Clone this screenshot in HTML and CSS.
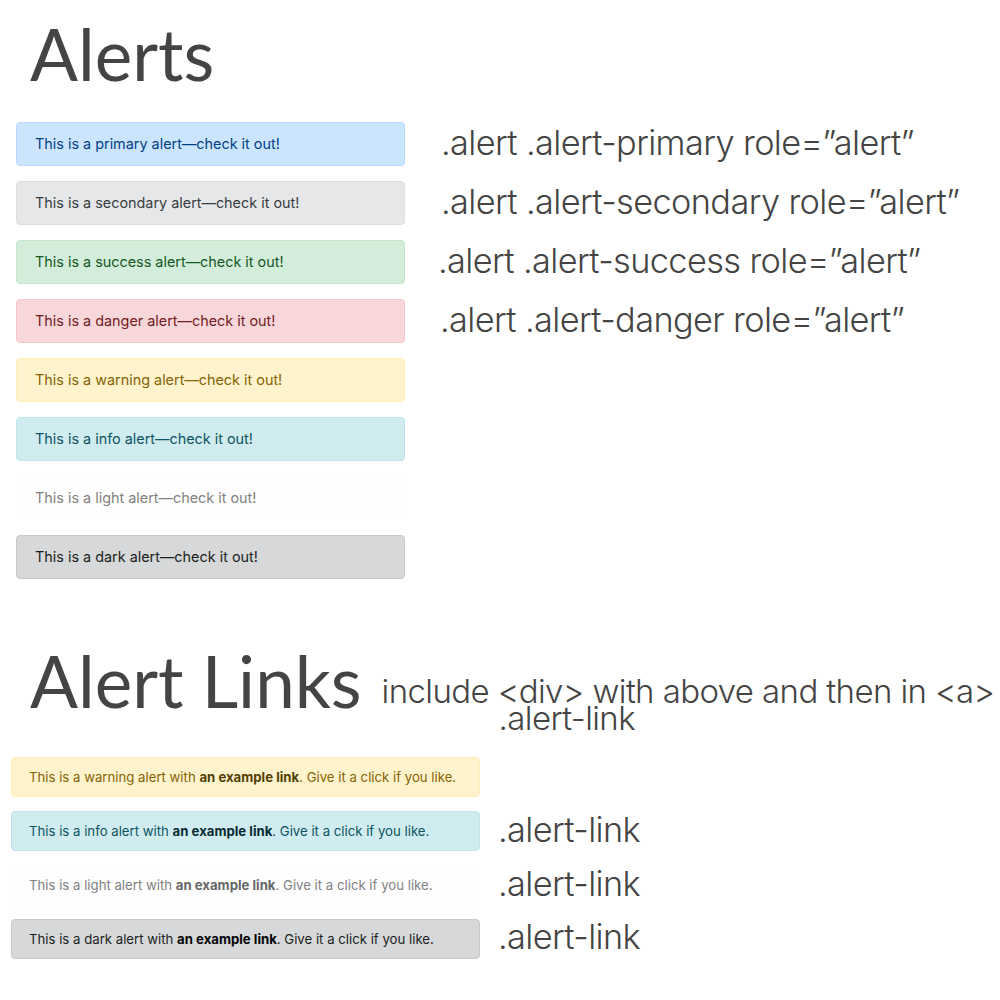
FILE: index.html
```html
<!DOCTYPE html>
<html>
<head>
<meta charset="utf-8">
<link rel="stylesheet" href="styles.css">
</head>
<body>
<div class="page">
  <h1 class="title">Alerts</h1>
  <div class="rows">
    <div class="row"><div class="alert alert-primary">This is a primary alert—check it out!</div><span class="label">.alert .alert-primary role=”alert”</span></div>
    <div class="row"><div class="alert alert-secondary">This is a secondary alert—check it out!</div><span class="label">.alert .alert-secondary role=”alert”</span></div>
    <div class="row"><div class="alert alert-success">This is a success alert—check it out!</div><span class="label label-shift">.alert .alert-success role=”alert”</span></div>
    <div class="row"><div class="alert alert-danger">This is a danger alert—check it out!</div><span class="label label-shift2">.alert .alert-danger role=”alert”</span></div>
    <div class="row"><div class="alert alert-warning">This is a warning alert—check it out!</div></div>
    <div class="row"><div class="alert alert-info">This is a info alert—check it out!</div></div>
    <div class="row"><div class="alert alert-light">This is a light alert—check it out!</div></div>
    <div class="row"><div class="alert alert-dark">This is a dark alert—check it out!</div></div>
  </div>

  <div class="links-head">
    <h1 class="title title-links">Alert Links</h1>
    <div class="note">
      <div class="note-line">include &lt;div&gt; with above and then in &lt;a&gt;</div>
      <div class="note-line note-indent">.alert-link</div>
    </div>
  </div>

  <div class="link-rows">
    <div class="row"><div class="alert alert-sm alert-warning">This is a warning alert with <a class="alert-link">an example link</a>. Give it a click if you like.</div></div>
    <div class="row"><div class="alert alert-sm alert-info">This is a info alert with <a class="alert-link">an example link</a>. Give it a click if you like.</div><span class="label label-sm">.alert-link</span></div>
    <div class="row"><div class="alert alert-sm alert-light">This is a light alert with <a class="alert-link">an example link</a>. Give it a click if you like.</div><span class="label label-sm">.alert-link</span></div>
    <div class="row"><div class="alert alert-sm alert-dark">This is a dark alert with <a class="alert-link">an example link</a>. Give it a click if you like.</div><span class="label label-sm label-last">.alert-link</span></div>
  </div>
</div>
</body>
</html>
```

FILE: styles.css
```css
html, body {
  margin: 0;
  padding: 0;
  background: #ffffff;
}
.page {
  width: 1000px;
  height: 1000px;
  overflow: hidden;
  font-family: "Inter", "Liberation Sans", sans-serif;
  color: #444444;
}
.title {
  margin: 0;
  padding: 14px 0 0 30px;
  font-family: "Lato", sans-serif;
  font-weight: 400;
  font-size: 71px;
  line-height: 80px;
  color: #444444;
}
.rows {
  display: flex;
  flex-direction: column;
  gap: 15px;
  padding: 28px 0 0 16px;
}
.row {
  display: flex;
  align-items: center;
}
.alert {
  box-sizing: border-box;
  width: 389px;
  height: 44px;
  padding: 0 18px;
  line-height: 42px;
  border: 1px solid transparent;
  border-radius: 4px;
  font-family: "Inter", "Liberation Sans", sans-serif;
  font-size: 14.4px;
  flex-shrink: 0;
  white-space: nowrap;
}
.alert-primary { background: #cce5ff; border-color: #b8daff; color: #004085; }
.alert-secondary { background: #e6e7e9; border-color: #dcdee0; color: #383d41; }
.alert-success { background: #d4edda; border-color: #c3e6cb; color: #155724; }
.alert-danger { background: #f8d7da; border-color: #f5c6cb; color: #721c24; }
.alert-warning { background: #fff3cd; border-color: #ffeeba; color: #856404; }
.alert-info { background: #d1ecf1; border-color: #bee5eb; color: #0c5460; }
.alert-light { background: #fefefe; border-color: #fdfdfe; color: #818182; }
.alert-dark { background: #d6d8d9; border-color: #c6c8ca; color: #1b1e21; }

.label {
  margin-left: 36px;
  margin-top: -4px;
  font-family: "Inter", sans-serif;
  font-weight: 300;
  font-size: 34.3px;
  letter-spacing: -0.6px;
  color: #444444;
  white-space: nowrap;
}
.label-shift { margin-left: 33px; }
.label-shift2 { margin-left: 35px; }

.links-head {
  display: flex;
  align-items: flex-start;
  padding-top: 62px;
}
.title-links {
  padding-top: 0;
  flex-shrink: 0;
}
.note {
  margin-left: 20px;
  padding-top: 37px;
  font-family: "Inter", sans-serif;
  font-weight: 300;
  font-size: 33px;
  letter-spacing: -0.6px;
  line-height: 27px;
  color: #444444;
  white-space: nowrap;
}
.note-indent { padding-left: 117px; }

.link-rows {
  display: flex;
  flex-direction: column;
  gap: 14px;
  padding: 25px 0 0 11px;
}
.alert-sm {
  width: 469px;
  height: 40px;
  padding: 0 17px;
  line-height: 38px;
  font-size: 13.2px;
}
.alert-link {
  font-weight: 700;
}
.alert-warning .alert-link { color: #533f03; }
.alert-info .alert-link { color: #062c33; }
.alert-light .alert-link { color: #686868; }
.alert-dark .alert-link { color: #040505; }
.label-sm { margin-left: 18px; }
.label-last { margin-top: -6px; }
```
